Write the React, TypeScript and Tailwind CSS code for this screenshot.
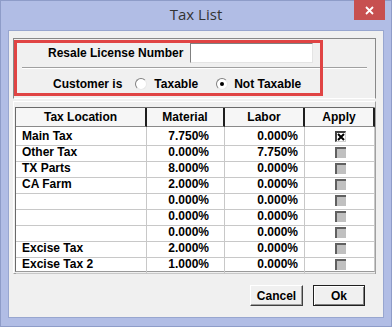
const rows = [
  { name: 'Main Tax', material: '7.750%', labor: '0.000%', apply: true },
  { name: 'Other Tax', material: '0.000%', labor: '7.750%', apply: false },
  { name: 'TX Parts', material: '8.000%', labor: '0.000%', apply: false },
  { name: 'CA Farm', material: '2.000%', labor: '0.000%', apply: false },
  { name: '', material: '0.000%', labor: '0.000%', apply: false },
  { name: '', material: '0.000%', labor: '0.000%', apply: false },
  { name: '', material: '0.000%', labor: '0.000%', apply: false },
  { name: 'Excise Tax', material: '2.000%', labor: '0.000%', apply: false },
  { name: 'Excise Tax 2', material: '1.000%', labor: '0.000%', apply: false },
]

function Radio({ checked }: { checked?: boolean }) {
  return (
    <span className="w-[12px] h-[12px] rounded-full bg-white border border-t-[#808080] border-l-[#808080] border-b-[#e8e8e8] border-r-[#e8e8e8] flex items-center justify-center shrink-0">
      {checked && <span className="w-[4px] h-[4px] rounded-full bg-black" />}
    </span>
  )
}

function Check({ checked }: { checked: boolean }) {
  if (checked) {
    return (
      <span className="w-[11px] h-[11px] bg-white border-t-2 border-l-2 border-[#404040] border-r border-b border-r-[#d0d0d0] border-b-[#d0d0d0] flex items-center justify-center">
        <svg width="8" height="8" viewBox="0 0 8 8">
          <path d="M1 1 L7 7 M7 1 L1 7" stroke="#000" strokeWidth="2" />
        </svg>
      </span>
    )
  }
  return <span className="w-[11px] h-[11px] bg-[#c0c0c0] border-t-2 border-l-2 border-[#606060]" />
}

export default function App() {
  return (
    <div className="w-[392px] h-[327px] bg-[#b1bde5] border border-[#8e9cc8] flex flex-col font-['Liberation_Sans',Arial,sans-serif] text-[12px] font-bold text-black">
      {/* title bar */}
      <div className="h-[29px] shrink-0 grid grid-cols-[1fr_auto_1fr]">
        <div />
        <div className="pt-[2px] font-['Open_Sans',sans-serif] font-normal text-[15px] text-[#333]">Tax List</div>
        <div className="flex justify-end pr-[6px]">
          <div className="w-[31px] h-[20px] bg-[#c75050] flex items-center justify-center -mt-px">
            <svg width="9" height="9" viewBox="0 0 9 9">
              <path d="M1 1 L8 8 M8 1 L1 8" stroke="#fff" strokeWidth="1.8" />
            </svg>
          </div>
        </div>
      </div>

      {/* client */}
      <div className="mx-[7px] w-[376px] h-[288px] bg-[#f0f0f0] border border-[#98a6cf] relative">
        {/* top group */}
        <div className="mt-[7px] ml-[4px] w-[363px] h-[61px] border-t border-l border-[#888] border-r border-b border-r-[#888] border-b-white">
          <div className="mt-[4px] pl-[34px] flex items-center h-[20px]">
            <span className="whitespace-nowrap">Resale License Number</span>
            <span className="ml-[7px] w-[123px] h-[20px] bg-white border border-t-[#808080] border-l-[#808080] border-b-[#e4e4e4] border-r-[#e4e4e4]" />
          </div>
          <div className="mt-[4px] ml-[8px] w-[345px] border-t border-[#a0a0a0] border-b border-b-white" />
          <div className="mt-[7px] pl-[39px] flex items-center h-[16px] whitespace-nowrap">
            <span>Customer is</span>
            <span className="ml-[13px]"><Radio /></span>
            <span className="ml-[7px]">Taxable</span>
            <span className="ml-[18px]"><Radio checked /></span>
            <span className="ml-[6px]">Not Taxable</span>
          </div>
        </div>

        {/* red highlight */}
        <div className="absolute left-[5px] top-[9px] w-[309px] h-[56px] border-[3px] border-[#e04444]" />

        {/* table group */}
        <div className="mt-[2px] ml-[4px] w-[363px] h-[173px] border-t border-l border-white border-r border-b border-r-[#a0a0a0] border-b-[#a0a0a0] pt-[5px] pl-[1px]">
          <div className="w-[360px] bg-white border-l border-t border-[#6a6a6a] border-b border-b-[#9a9a9a] border-r border-r-[#c8c8c8]">
            <div className="grid grid-cols-[131px_78px_80px_70px] h-[19px] bg-[#f6f6f6]">
              {['Tax Location', 'Material', 'Labor', 'Apply'].map((h) => (
                <div key={h} className="flex items-center justify-center border-r-2 border-[#1e1e1e] border-b border-b-[#8a8a8a]">
                  {h}
                </div>
              ))}
            </div>
            {rows.map((r, i) => (
              <div key={i} className="grid grid-cols-[131px_78px_80px_70px] h-[16px]">
                <div className="pl-[6px] flex items-center border-r border-b border-[#c8c8c8]">{r.name}</div>
                <div className="pr-[15px] flex items-center justify-end border-r border-b border-[#c8c8c8]">{r.material}</div>
                <div className="pr-[6px] flex items-center justify-end border-r border-b border-[#c8c8c8]">{r.labor}</div>
                <div className="flex items-center justify-center border-b border-[#c8c8c8]">
                  <Check checked={r.apply} />
                </div>
              </div>
            ))}
          </div>
        </div>

        {/* buttons */}
        <div className="mt-[11px] pr-[18px] flex justify-end gap-[10px]">
          <button className="w-[53px] h-[21px] bg-[#f0f0f0] border border-t-white border-l-white border-r-[#404040] border-b-[#404040] shadow-[inset_-1px_-1px_0_#a0a0a0] font-bold text-[12px]">
            Cancel
          </button>
          <button className="w-[52px] h-[21px] bg-[#f0f0f0] border border-[#202020] shadow-[inset_1px_1px_0_#fff,inset_-1px_-1px_0_#808080] font-bold text-[12px]">
            Ok
          </button>
        </div>
      </div>
    </div>
  )
}
